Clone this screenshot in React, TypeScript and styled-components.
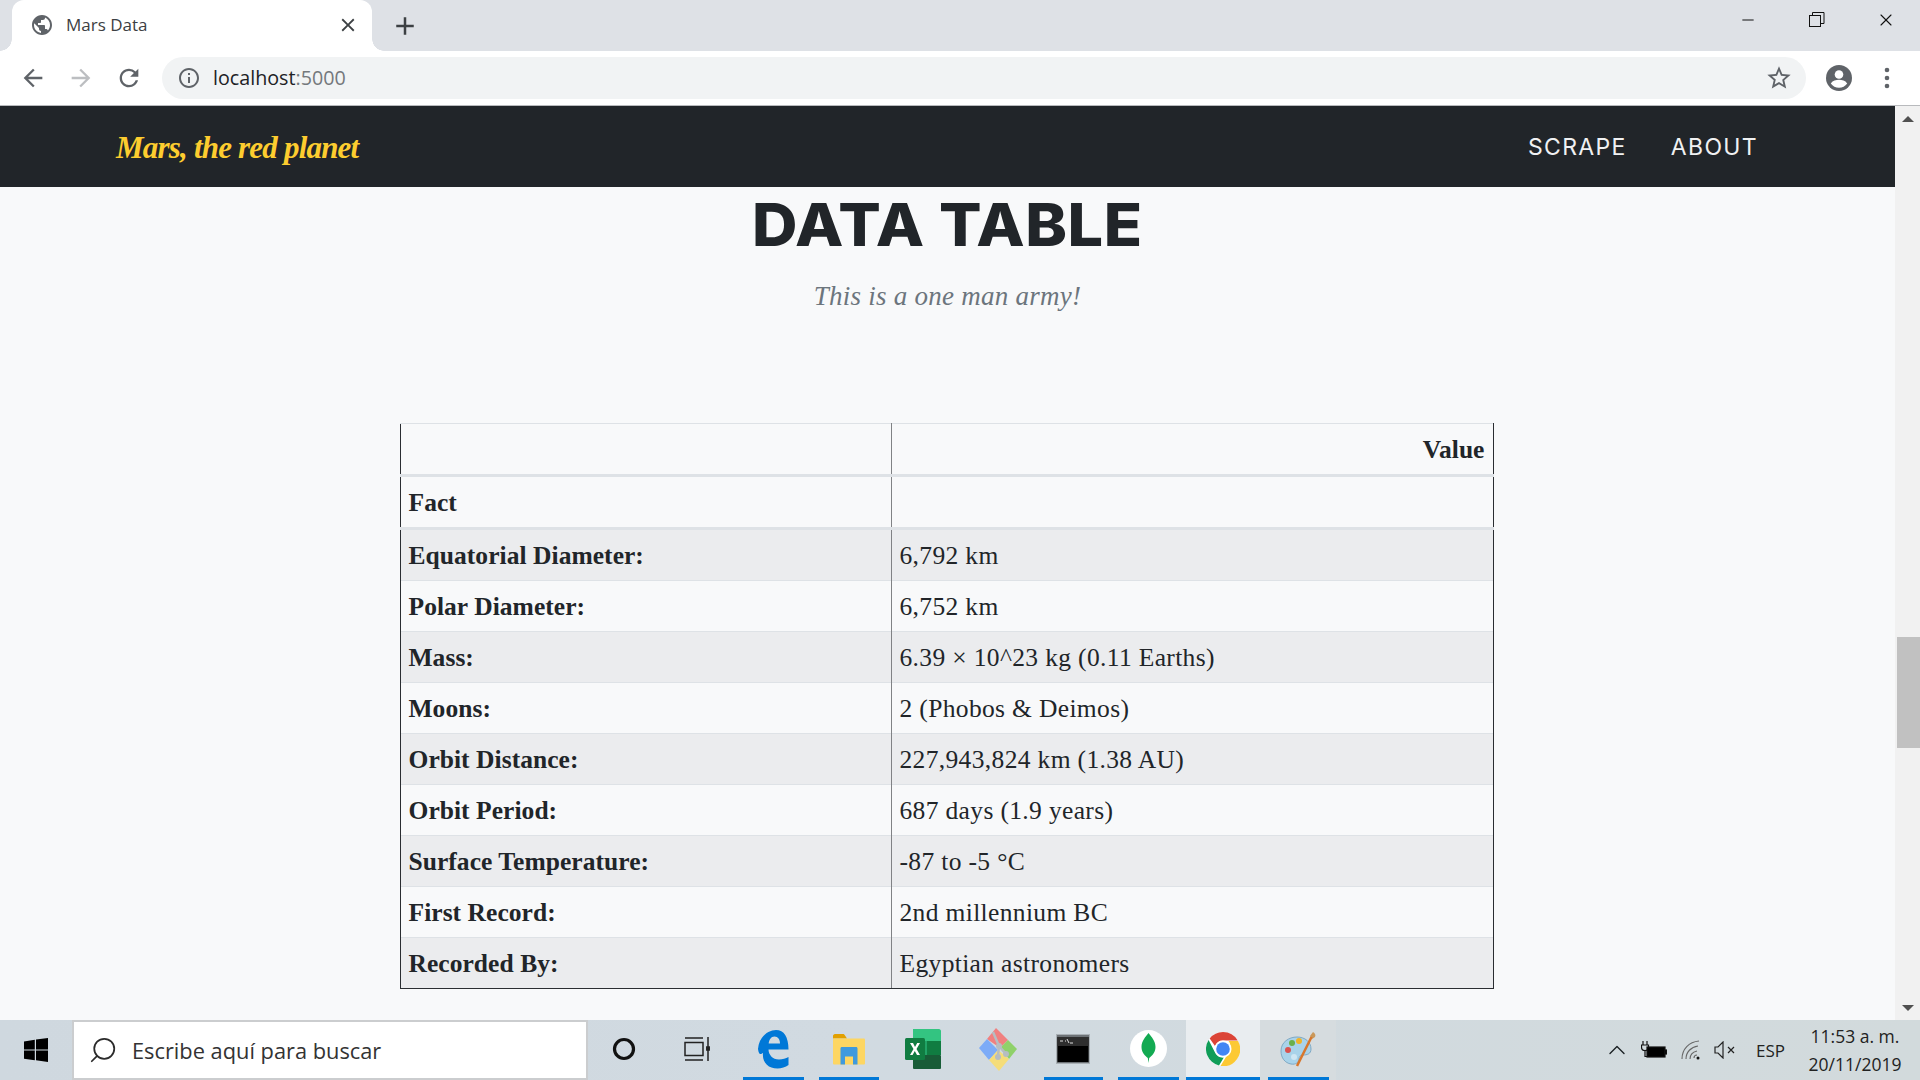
import React from 'react';
import styled, { createGlobalStyle } from 'styled-components';
import { ChevronUp, Search, X, Minus } from 'lucide-react';
import { MdAdd, MdArrowBack, MdArrowForward, MdClose, MdInfoOutline, MdPublic, MdRefresh, MdStarBorder } from 'react-icons/md';

const Global = createGlobalStyle`
  html, body { margin: 0; padding: 0; overflow: hidden; }
  * { box-sizing: border-box; }
`;

const Screen = styled.div`
  width: 1920px; height: 1080px; display: flex; flex-direction: column; overflow: hidden;
  font-family: "Open Sans", "Noto Sans", sans-serif; background: #f8f9fa;
`;

const TabStrip = styled.div`
  height: 51px; flex: none; display: flex; background: #dee1e6;
`;
const Tab = styled.div`
  position: relative; width: 360px; margin-left: 12px; background: #fff; border-radius: 12px 12px 0 0;
  display: flex; align-items: center; padding: 0 13px 2px 18px; color: #3c4043; font-size: 17px;
  &::before, &::after {
    content: ''; position: absolute; bottom: 0; width: 12px; height: 12px;
  }
  &::before { left: -12px; background: radial-gradient(circle at 0 0, #dee1e6 11.5px, #fff 12px); }
  &::after { right: -12px; background: radial-gradient(circle at 100% 0, #dee1e6 11.5px, #fff 12px); }
`;
const TabTitle = styled.span`
  margin-left: 12px; flex: 1;
`;
const NewTab = styled.div`
  margin-left: 16px; width: 34px; display: flex; align-items: center; justify-content: center; color: #3c4043;
`;
const WindowControls = styled.div`
  margin-left: auto; display: flex;
`;
const WindowButton = styled.div`
  width: 69px; height: 40px; display: flex; align-items: center; justify-content: center; color: #111;
`;

const Toolbar = styled.div`
  height: 55px; flex: none; display: flex; align-items: center; padding: 0 9px 1px; background: #fff;
  border-bottom: 1px solid #b8babd;
`;
const ToolButton = styled.div<{ $dim?: boolean }>`
  width: 48px; height: 42px; display: flex; align-items: center; justify-content: center;
  color: ${p => (p.$dim ? '#bcbec1' : '#5f6368')};
`;
const Omnibox = styled.div`
  flex: 1; height: 42px; margin: 0 9px; border-radius: 21px; background: #f1f3f4;
  display: flex; align-items: center; padding: 0 13px 0 15px; color: #5f6368;
`;
const Url = styled.span`
  margin-left: 12px; flex: 1; font-size: 19.7px; color: #202124;
  & > span { color: #74787c; }
`;

const Viewport = styled.div`
  flex: 1; min-height: 0; display: flex;
`;
const Page = styled.div`
  flex: 1; min-width: 0; display: flex; flex-direction: column; align-items: center;
`;
const Navbar = styled.nav`
  align-self: stretch; height: 81px; flex: none; background: #212529; display: flex; align-items: center;
  padding: 0 137px 0 116px;
`;
const Brand = styled.a`
  font-family: "Liberation Serif", serif; font-style: italic; font-weight: 700; font-size: 31px;
  color: #fdcd2f; letter-spacing: -0.8px; padding-top: 2px;
`;
const NavLinks = styled.div`
  margin-left: auto; display: flex; gap: 44px; padding-top: 1px;
`;
const NavLink = styled.a`
  font-family: Inter, sans-serif; font-size: 23px; font-weight: 400; color: #f0f1f2; letter-spacing: 1.35px;
`;
const Title = styled.h1`
  margin: 8px 0 0; font-family: Inter, sans-serif; font-weight: 800; font-size: 59px; line-height: 60px;
  color: #212529; letter-spacing: 0.5px; transform: scaleX(1.066);
`;
const Subtitle = styled.p`
  margin: 23px 0 0; font-family: "Liberation Serif", serif; font-style: italic; font-size: 27px; line-height: 36px;
  color: #6c757d; letter-spacing: 0.25px;
`;
const DataTable = styled.table`
  margin: 109px 2px 0 0; width: 1094px; table-layout: fixed; border-collapse: collapse; flex: none;
  font-family: "Liberation Serif", serif; font-size: 25.5px; color: #212529;
  & th, & td {
    height: 51px; padding: 2px 8px 0; border-top: 1px solid #dee2e6; border-left: 1px solid #808285;
    border-right: 1px solid #808285; vertical-align: middle;
  }
  & th { font-weight: 700; text-align: left; letter-spacing: 0.05px; }
  & td { letter-spacing: 0.35px; }
  & thead th { border-bottom: 3px solid #dee2e6; height: 52px; }
  & thead tr:last-child th { height: 53px; }
  & tbody tr:first-child > * { height: 52px; }
  & thead tr:first-child th:last-child { text-align: right; }
  & tr > :first-child { width: 491px; border-left: 1px solid #2a2d31; }
  & tr > :last-child { border-right: 1px solid #2a2d31; }
  & tbody tr:nth-child(odd) > * { background: #ebecee; }
  & tbody tr:last-child > * { border-bottom: 1px solid #2a2d31; }
`;

const Scrollbar = styled.div`
  width: 25px; flex: none; background: #f1f1f1; display: flex; flex-direction: column; align-items: flex-end;
`;
const ScrollArrow = styled.div<{ $down?: boolean }>`
  width: 100%; height: 25px; flex: none; display: flex; align-items: center; justify-content: center;
  margin-top: ${p => (p.$down ? 'auto' : '0')};
  &::before {
    content: ''; border-left: 6px solid transparent; border-right: 6px solid transparent;
    ${p => (p.$down ? 'border-top: 6px solid #505050;' : 'border-bottom: 6px solid #505050;')}
  }
`;
const ScrollThumb = styled.div`
  width: 23px; height: 111px; margin-top: 506px; background: #c1c1c1; flex: none;
`;

const Taskbar = styled.div`
  height: 60px; flex: none; display: flex; background: linear-gradient(90deg, #cfd8df 0%, #d1dae1 45%, #d2dadc 100%);
`;
const StartButton = styled.div`
  width: 72px; display: flex; align-items: center; justify-content: center; padding-bottom: 1px;
`;
const SearchBox = styled.div`
  width: 516px; height: 60px; background: #fff; border: 2px solid #cbcdcf; display: flex; align-items: center;
  padding-left: 14px; font-size: 21.8px;
`;
const SearchGlyph = styled(Search)`
  transform: scaleX(-1); color: #2b2b2b;
`;
const SearchText = styled.span`
  margin-left: 14px; color: #333;
`;
const TaskItem = styled.div<{ $w?: number; $open?: boolean; $active?: boolean; $tint?: boolean }>`
  position: relative; width: ${p => p.$w ?? 75}px; display: flex; align-items: center; justify-content: center;
  padding-bottom: 3px;
  background: ${p => (p.$active ? '#e9edf0' : p.$tint ? '#d6dcdf' : 'transparent')};
  ${p => p.$open && `&::after {
    content: ''; position: absolute; bottom: 0; height: 3px; background: #0078d7;
    left: ${p.$active ? 0 : 8}px; right: ${p.$active ? 0 : 7}px;
  }`}
`;
const Tray = styled.div`
  margin-left: auto; display: flex; align-items: center; color: #1c2125; padding-right: 18px;
`;
const TrayIcon = styled.div<{ $ml: number }>`
  display: flex; margin-left: ${p => p.$ml}px;
`;
const Lang = styled.span`
  margin-left: 20px; font-size: 17px; color: #222;
`;
const Clock = styled.div`
  margin-left: 23px; width: 94px; text-align: center; font-size: 17.5px; line-height: 28px; color: #222;
  white-space: nowrap;
`;

const Restore = () => (
  <svg width="16" height="16" viewBox="0 0 16 16" fill="none" stroke="#111" strokeWidth="1">
    <rect x="0.500" y="3.500" width="11" height="11" /><path d="M3.500 3.500V.5h11.500v11h-3.500" />
  </svg>
);
const Avatar = () => (
  <svg width="26" height="26" viewBox="0 0 26 26">
    <circle cx="13" cy="13" r="13" fill="#5f6368" />
    <circle cx="13" cy="9.500" r="4.300" fill="#fff" />
    <path d="M4.800 18.500c2-3 5.200-3.700 8.200-3.700s6.200.7 8.200 3.700A10.500 10.500 0 0 1 13 22.800a10.500 10.500 0 0 1-8.200-4.300z" fill="#fff" />
  </svg>
);
const Dots = () => (
  <svg width="6" height="22" viewBox="0 0 6 22" fill="#5f6368">
    <circle cx="3" cy="3" r="2.300" /><circle cx="3" cy="11" r="2.300" /><circle cx="3" cy="19" r="2.300" />
  </svg>
);
const WinLogo = () => (
  <svg width="24" height="24" viewBox="0 0 24 24" fill="#000">
    <path d="M0 3.400 10.800 1.800v9.600H0zM12 1.600 24 0v11.400H12zM0 12.600h10.800v9.600L0 20.700zM12 12.600h12V24l-12-1.700z" />
  </svg>
);
const TaskView = () => (
  <svg width="28" height="26" viewBox="0 0 28 26" fill="none" stroke="#222" strokeWidth="1.500">
    <rect x="1" y="6.500" width="18" height="13" />
    <path d="M1 2h18M1 24h18M24 1v24M24 11.500v3" />
    <rect x="22.800" y="11" width="2.400" height="3" fill="#222" />
  </svg>
);
const Edge = () => (
  <svg width="32" height="40" viewBox="0 0 32 40">
    <path fill="#0078d7" d="M1 20C2 8 11 1 19 1c8 0 12.500 7 12.500 19.500H11.500c0 5 4 10 10.500 10 3.500 0 7-1 9.500-2.500v8c-3 2-7 3.500-11 3.500C11 39.500 5 33 6 24c-2 1-4 3-5-4zM11.700 14.500h11.300c0-4-2-7-5.500-7s-5.500 3.500-5.800 7z" />
  </svg>
);
const Folder = () => (
  <svg width="32" height="32" viewBox="0 0 32 32">
    <path fill="#e2a000" d="M0 3c0-1 .8-2 2-2h8c1 0 1.500.5 3 3l1 1.500H0z" />
    <rect x="0" y="5.500" width="32" height="26" rx="1" fill="#fdd663" />
    <path fill="#3f9ade" d="M7.500 31.500V15.500c0-1 .6-1.500 1.500-1.500h14c1 0 1.500.6 1.500 1.500v16h-4.500v-8h-8v8z" />
  </svg>
);
const Excel = () => (
  <svg width="36" height="40" viewBox="0 0 36 40">
    <path fill="#33c481" d="M8 0h26c1 0 2 1 2 2v10H22L8 12z" />
    <rect x="8" y="12" width="14" height="14" fill="#21a366" />
    <rect x="22" y="12" width="14" height="14" fill="#107c41" />
    <rect x="8" y="26" width="28" height="14" rx="1" fill="#185c37" />
    <rect x="0" y="9" width="20" height="22" rx="1.500" fill="#107c41" />
    <path d="M5 14h3l2 4 2.200-4H15l-3.500 6 3.500 6h-3l-2.200-4-2.200 4H5l3.500-6z" fill="#fff" />
  </svg>
);
const Git = () => (
  <svg width="38" height="44" viewBox="0 0 38 44">
    <path fill="#f08080" d="M8 12 17 1l12 12-8 8z" />
    <path fill="#7cabf7" d="M0 21 8 12l11 11-9 10z" />
    <path fill="#8fd16a" d="M21 21l8-8 9 9-8 10z" />
    <path fill="#f5dd79" d="M10 33l9-10 11 9-10 12z" />
    <path d="M14 5l6 14M20 19l-1 10M20 19l8 9" stroke="#b6bdc2" strokeWidth="2.500" fill="none" />
    <circle cx="20" cy="19" r="3" fill="#b6bdc2" /><circle cx="19" cy="30" r="3" fill="#b6bdc2" /><circle cx="27" cy="27" r="3" fill="#b6bdc2" />
  </svg>
);
const Cmd = () => (
  <svg width="34" height="30" viewBox="0 0 34 30">
    <rect x="0" y="0" width="34" height="30" fill="#a9b0b5" />
    <rect x="1" y="1" width="32" height="28" fill="#6d7276" />
    <rect x="1.500" y="3" width="31" height="25" fill="#000" />
    <rect x="1.500" y="3" width="31" height="9" fill="#2e2e2e" />
    <path d="M4 7h3M9 7h1M11 5l2 4M14 9h3" stroke="#ddd" strokeWidth="1" fill="none" />
  </svg>
);
const Mongo = () => (
  <svg width="37" height="37" viewBox="0 0 37 37">
    <circle cx="18.500" cy="18.500" r="18.500" fill="#fff" />
    <path fill="#13aa52" d="M18.500 3c3 4 7 8 7 14 0 6-4 9-6.300 11l-.7 5-.7-5c-2.300-2-6.300-5-6.300-11 0-6 4-10 7-14z" />
  </svg>
);
const Chrome = () => (
  <svg width="34" height="34" viewBox="0 0 34 34">
    <circle cx="17" cy="17" r="17" fill="#fff" />
    <path fill="#db4437" d="M17 0a17 17 0 0 1 14.700 8.500H17a8.500 8.500 0 0 0-8 5.600L3.700 6.500A17 17 0 0 1 17 0z" />
    <path fill="#0f9d58" d="M2.600 7.900A17 17 0 0 0 13 33.500l4.800-8.100a8.500 8.500 0 0 1-8.400-4.200z" />
    <path fill="#fcc934" d="M14.500 34A17 17 0 0 0 32 9h-9.500a8.500 8.500 0 0 1 .5 11z" />
    <circle cx="17" cy="17" r="8.500" fill="#fff" />
    <circle cx="17" cy="17" r="6.800" fill="#4285f4" />
  </svg>
);
const Paint = () => (
  <svg width="38" height="38" viewBox="0 0 38 38">
    <path d="M2 21C2 12 10 7 18 7s14 5 14 12c0 5-4 6-8 6-3 0-4 2-4 4 0 3-3 6-8 5-6-1-10-6-10-13z" fill="#a9d3ea" stroke="#7fa9c4" />
    <circle cx="9" cy="20" r="3" fill="#d9534f" /><circle cx="13" cy="13" r="3" fill="#6ab04c" />
    <circle cx="20" cy="11" r="3" fill="#f0b429" /><circle cx="15" cy="27" r="3" fill="#cfe6f3" />
    <path d="M34 2c2 1 3 3 2 5l-3 2-2-3z" fill="#c9985a" />
    <path d="M32.500 7 18 36" stroke="#d8772c" strokeWidth="2.500" />
  </svg>
);
const Plug = () => (
  <svg width="26" height="24" viewBox="0 0 26 24" fill="none" stroke="#111" strokeWidth="1.200">
    <path d="M2 3v4M6 3v4M0.500 7h7v2a3.500 3.500 0 0 1-7 0zM4 12.500v6h2" />
    <rect x="6" y="9" width="18" height="10" fill="#000" />
    <rect x="24" y="12" width="1.500" height="4" fill="#000" />
  </svg>
);
const Wifi = () => (
  <svg width="20" height="20" viewBox="0 0 20 20" fill="none" stroke="#666" strokeWidth="1.100">
    <path d="M1 19C1 9 8 2 18 1M5 19c0-7 5-12 12-13M9 19c0-4 3-7 7-8M13 18c0-2 1-3 3-3" />
    <circle cx="17" cy="18" r="1.500" fill="#111" stroke="none" />
  </svg>
);
const Speaker = () => (
  <svg width="22" height="18" viewBox="0 0 22 18" fill="none" stroke="#222" strokeWidth="1.200">
    <path d="M1 6h3l5-5v16l-5-5H1zM14 6l6 6M20 6l-6 6" />
  </svg>
);

const facts: [string, string][] = [
  ['Equatorial Diameter:', '6,792 km'],
  ['Polar Diameter:', '6,752 km'],
  ['Mass:', '6.39 × 10^23 kg (0.11 Earths)'],
  ['Moons:', '2 (Phobos & Deimos)'],
  ['Orbit Distance:', '227,943,824 km (1.38 AU)'],
  ['Orbit Period:', '687 days (1.9 years)'],
  ['Surface Temperature:', '-87 to -5 °C'],
  ['First Record:', '2nd millennium BC'],
  ['Recorded By:', 'Egyptian astronomers'],
];

export default function App() {
  return (
    <Screen>
      <Global />
      <TabStrip>
        <Tab>
          <MdPublic size={24} color="#5f6368" />
          <TabTitle>Mars Data</TabTitle>
          <MdClose size={22} color="#3c4043" />
        </Tab>
        <NewTab><MdAdd size={30} /></NewTab>
        <WindowControls>
          <WindowButton><Minus size={18} strokeWidth={1} absoluteStrokeWidth /></WindowButton>
          <WindowButton><Restore /></WindowButton>
          <WindowButton><X size={20} strokeWidth={1.1} absoluteStrokeWidth /></WindowButton>
        </WindowControls>
      </TabStrip>
      <Toolbar>
        <ToolButton><MdArrowBack size={28} /></ToolButton>
        <ToolButton $dim><MdArrowForward size={28} /></ToolButton>
        <ToolButton><MdRefresh size={28} /></ToolButton>
        <Omnibox>
          <MdInfoOutline size={24} />
          <Url>localhost<span>:5000</span></Url>
          <MdStarBorder size={28} />
        </Omnibox>
        <ToolButton><Avatar /></ToolButton>
        <ToolButton><Dots /></ToolButton>
      </Toolbar>
      <Viewport>
        <Page>
          <Navbar>
            <Brand>Mars, the red planet</Brand>
            <NavLinks>
              <NavLink>SCRAPE</NavLink>
              <NavLink>ABOUT</NavLink>
            </NavLinks>
          </Navbar>
          <Title>DATA TABLE</Title>
          <Subtitle>This is a one man army!</Subtitle>
          <DataTable>
            <thead>
              <tr><th></th><th>Value</th></tr>
              <tr><th>Fact</th><th></th></tr>
            </thead>
            <tbody>
              {facts.map(([k, v]) => (
                <tr key={k}><th>{k}</th><td>{v}</td></tr>
              ))}
            </tbody>
          </DataTable>
        </Page>
        <Scrollbar>
          <ScrollArrow />
          <ScrollThumb />
          <ScrollArrow $down />
        </Scrollbar>
      </Viewport>
      <Taskbar>
        <StartButton><WinLogo /></StartButton>
        <SearchBox>
          <SearchGlyph size={30} strokeWidth={1.4} />
          <SearchText>Escribe aquí para buscar</SearchText>
        </SearchBox>
        <TaskItem $w={72}>
          <svg width="24" height="24" viewBox="0 0 24 24" fill="none" stroke="#111" strokeWidth="3.200"><circle cx="12" cy="12" r="9.500" /></svg>
        </TaskItem>
        <TaskItem $w={75}><TaskView /></TaskItem>
        <TaskItem $w={76} $open><Edge /></TaskItem>
        <TaskItem $open><Folder /></TaskItem>
        <TaskItem $w={74}><Excel /></TaskItem>
        <TaskItem $w={76}><Git /></TaskItem>
        <TaskItem $w={74} $open><Cmd /></TaskItem>
        <TaskItem $w={76} $open><Mongo /></TaskItem>
        <TaskItem $w={74} $open $active><Chrome /></TaskItem>
        <TaskItem $w={76} $open $tint><Paint /></TaskItem>
        <Tray>
          <TrayIcon $ml={0}><ChevronUp size={28} strokeWidth={1.2} /></TrayIcon>
          <TrayIcon $ml={10}><Plug /></TrayIcon>
          <TrayIcon $ml={14}><Wifi /></TrayIcon>
          <TrayIcon $ml={13}><Speaker /></TrayIcon>
          <Lang>ESP</Lang>
          <Clock>11:53 a. m.<br />20/11/2019</Clock>
        </Tray>
      </Taskbar>
    </Screen>
  );
}
